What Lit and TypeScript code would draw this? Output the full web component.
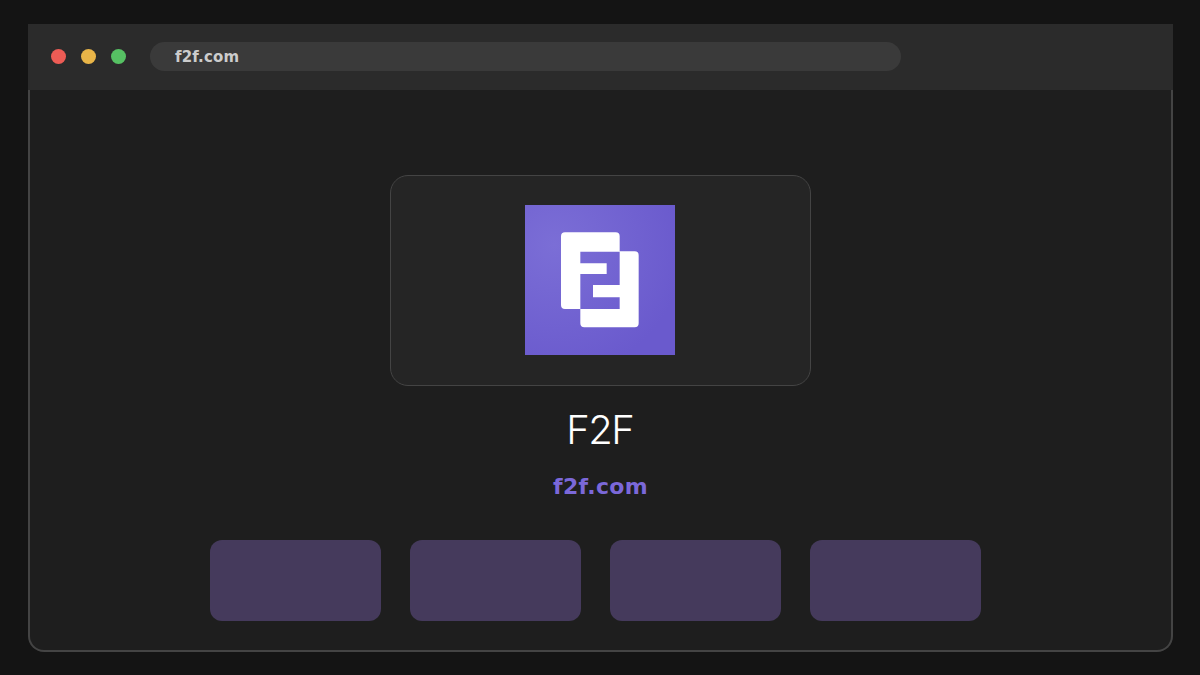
import { LitElement, html, css } from "lit";
import { customElement } from "lit/decorators.js";

@customElement("app-root")
export class AppRoot extends LitElement {
  static styles = css`
    :host {
      display: block;
      width: 1200px;
      height: 675px;
      box-sizing: border-box;
      padding: 24px 27px 23px 28px;
      background: #141414;
      overflow: hidden;
    }
    .window {
      height: 100%;
      display: flex;
      flex-direction: column;
    }
    .bar {
      height: 66px;
      flex: none;
      background: #2b2b2b;
      display: flex;
      align-items: center;
      padding: 0 0 2px 23px;
      box-sizing: border-box;
    }
    .dots {
      display: flex;
      gap: 15px;
    }
    .dot {
      width: 15px;
      height: 15px;
      border-radius: 50%;
    }
    .red { background: #ed5c55; }
    .yellow { background: #e9b548; }
    .green { background: #56c163; }
    .address {
      margin-left: 24px;
      width: 751px;
      height: 29px;
      box-sizing: border-box;
      padding-left: 25px;
      border-radius: 15px;
      background: #3a3a3a;
      color: #cccccc;
      font: 700 15px/31px "DejaVu Sans", sans-serif;
      letter-spacing: 0.15px;
    }
    .body {
      flex: 1;
      background: #1e1e1e;
      border: 2px solid #444444;
      border-top: none;
      border-radius: 0 0 16px 16px;
      display: flex;
      flex-direction: column;
      align-items: center;
      padding-top: 85px;
    }
    .card {
      width: 421px;
      height: 211px;
      box-sizing: border-box;
      border: 1px solid #444444;
      border-radius: 18px;
      background: #252525;
      padding: 29px 135px 30px 134px;
    }
    .logo {
      width: 150px;
      height: 150px;
      display: block;
    }
    h1 {
      margin: 20px 1.5px 0 0;
      font: 300 40px/48px Inter, sans-serif;
      letter-spacing: -1.5px;
      color: #ffffff;
    }
    .url {
      margin-top: 18px;
      font: 700 22px/30px "DejaVu Sans", sans-serif;
      letter-spacing: 0.3px;
      color: #7b68d9;
    }
    .buttons {
      margin: 38px 10px 0 0;
      display: flex;
      gap: 29px;
    }
    .btn {
      width: 171px;
      height: 81px;
      border-radius: 12px;
      background: #453a5c;
    }
  `;

  render() {
    return html`
      <div class="window">
        <div class="bar">
          <div class="dots">
            <div class="dot red"></div>
            <div class="dot yellow"></div>
            <div class="dot green"></div>
          </div>
          <div class="address">f2f.com</div>
        </div>
        <div class="body">
          <div class="card">
            <svg class="logo" viewBox="0 0 150 150" aria-label="F2F logo">
              <defs>
                <radialGradient id="g" gradientUnits="userSpaceOnUse" cx="30" cy="40" r="130">
                  <stop offset="0" stop-color="#7b6ed6"></stop>
                  <stop offset="1" stop-color="#6a5acd"></stop>
                </radialGradient>
              </defs>
              <rect width="150" height="150" fill="url(#g)"></rect>
              <path
                fill="#fff"
                fill-rule="evenodd"
                d="M40 27.33H90.67a4 4 0 0 1 4 4V46.33H109.67a4 4 0 0 1 4 4V118.33a4 4 0 0 1-4 4H59.33a4 4 0 0 1-4-4V104H40a4 4 0 0 1-4-4V31.33a4 4 0 0 1 4-4Z
                M55.33 46.67H94.67V80H68V92.33H94.67V104H55.33V69H81.67V58.33H55.33Z"
              ></path>
            </svg>
          </div>
          <h1>F2F</h1>
          <div class="url">f2f.com</div>
          <div class="buttons">
            <div class="btn"></div>
            <div class="btn"></div>
            <div class="btn"></div>
            <div class="btn"></div>
          </div>
        </div>
      </div>
    `;
  }
}
